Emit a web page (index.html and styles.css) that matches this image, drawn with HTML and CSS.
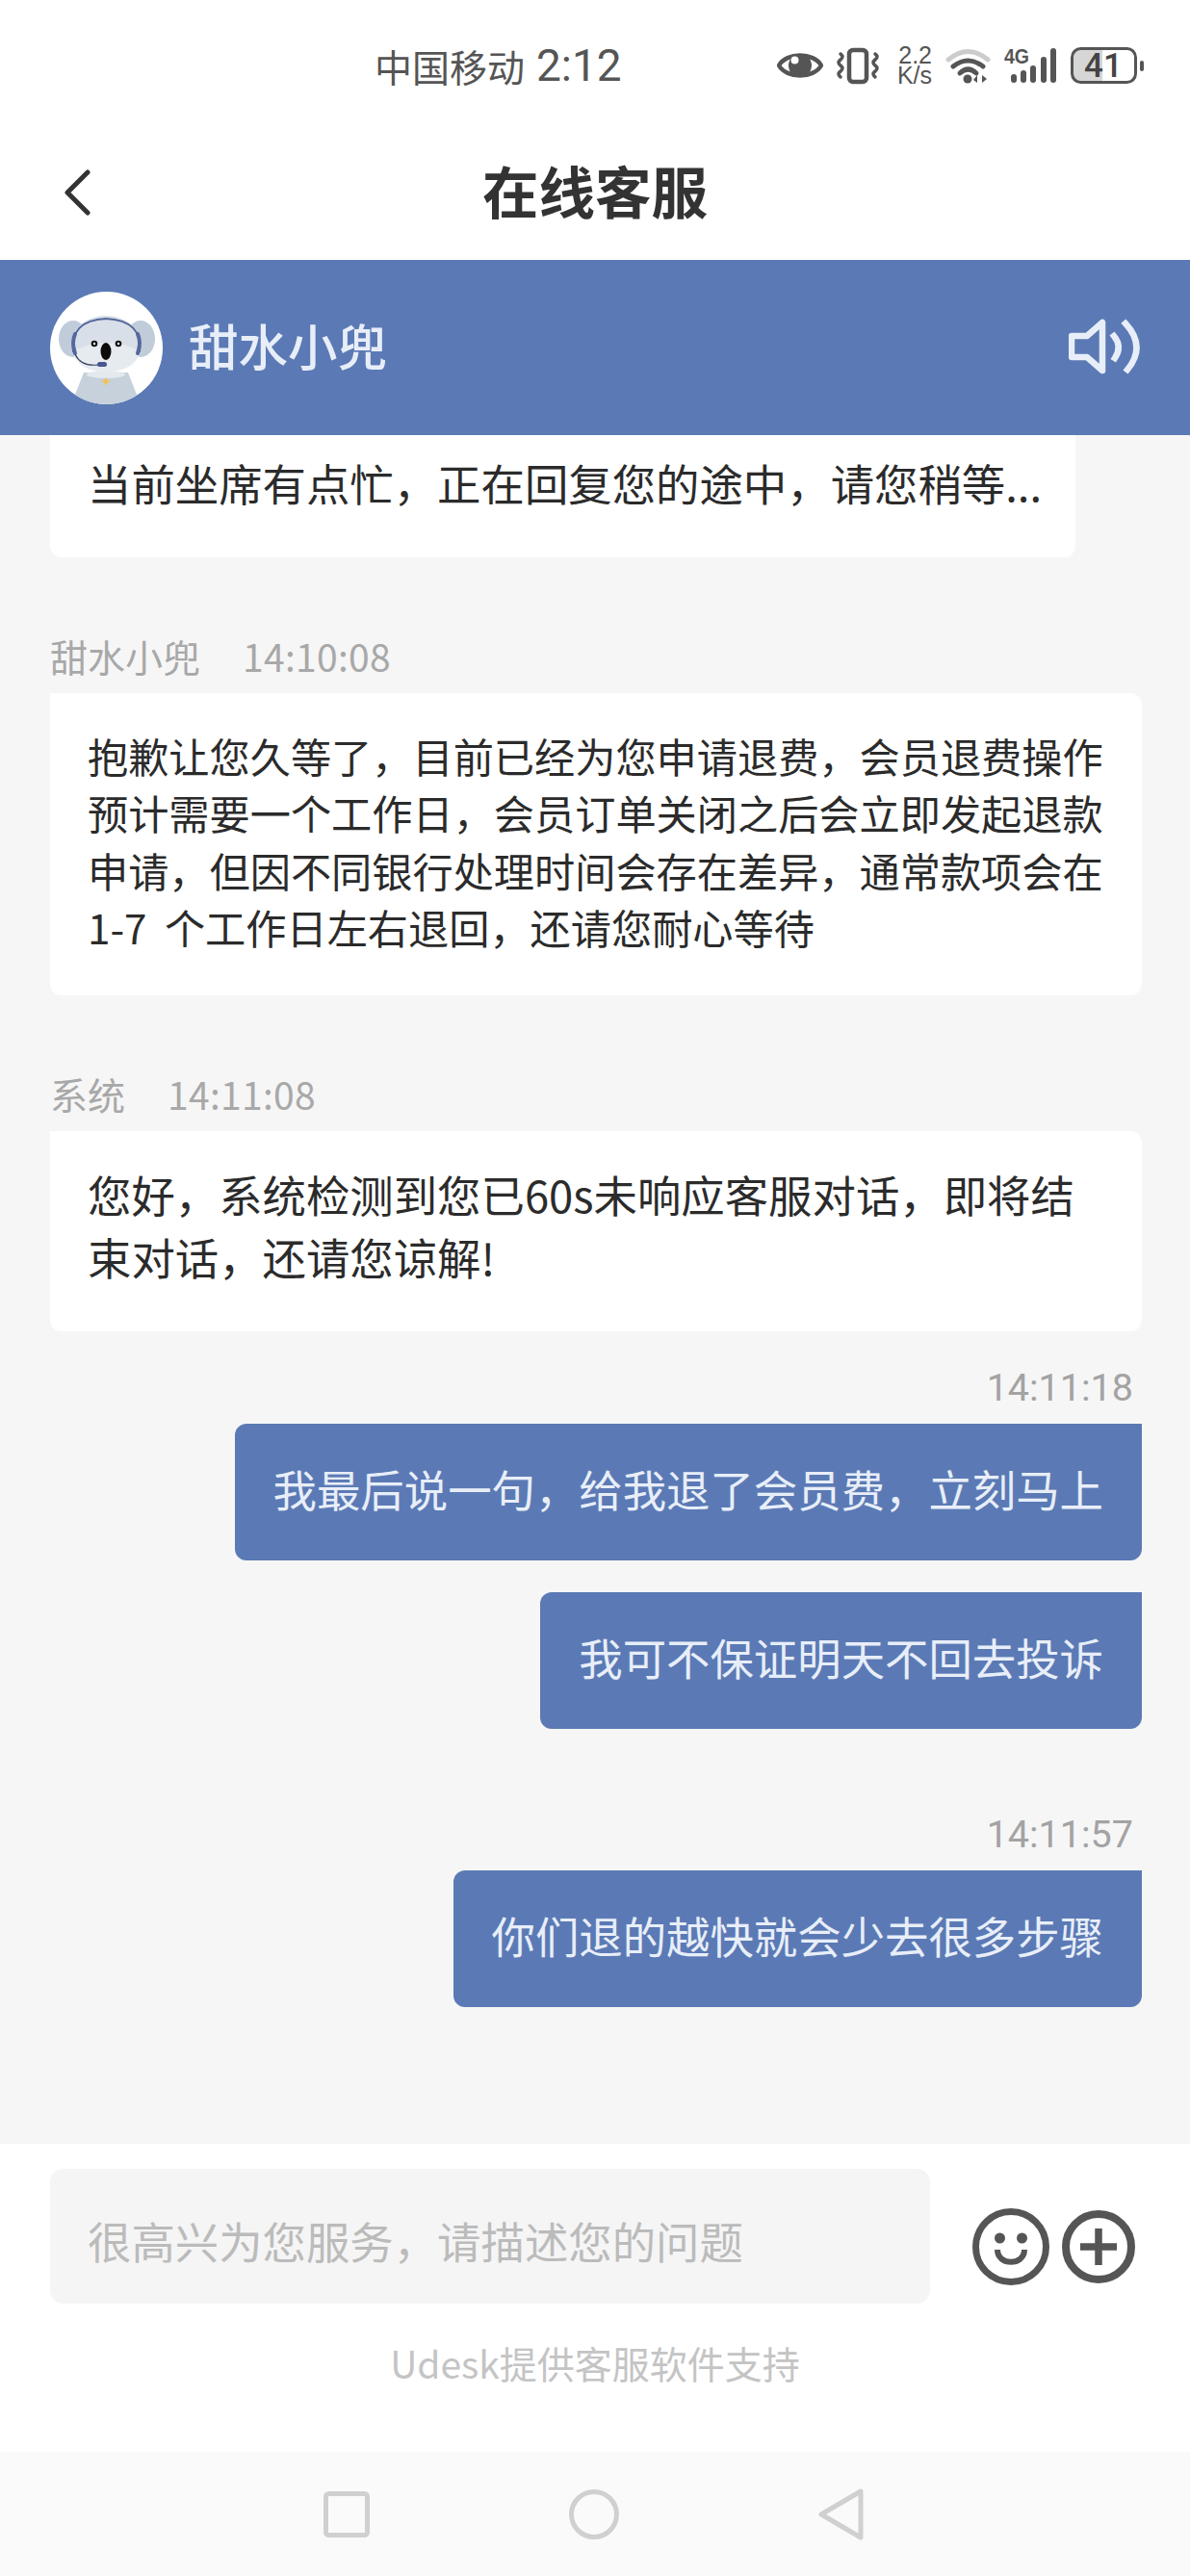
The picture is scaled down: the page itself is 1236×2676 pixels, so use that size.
FILE: index.html
```html
<!DOCTYPE html>
<html lang="zh-CN">
  <head>
    <meta charset="UTF-8" />
    <title>在线客服</title>
    <link rel="stylesheet" href="styles.css">
  </head>
  <body>
    <!-- Status Bar -->
    <div class="statusBar">
      <span class="carrier">中国移动</span>
      <span class="clock">2:12</span>
      <div class="statusIcons">
        <svg width="48" height="40" viewBox="0 0 48 40">
          <path d="M2 20C10 6 38 6 46 20C38 34 10 34 2 20Z" fill="none" stroke="#555" stroke-width="4.500" stroke-linejoin="round"/>
          <circle cx="24" cy="20" r="12" fill="#555"/>
          <circle cx="18.500" cy="14.500" r="4" fill="#fff"/>
        </svg>
        <svg width="45" height="40" viewBox="0 0 45 40">
          <rect x="13" y="4" width="18" height="33" rx="4" fill="none" stroke="#555" stroke-width="4.500"/>
          <path d="M4 8q4 3 0 6q-4 3 0 6q4 3 0 6q-4 3 0 6M40 8q4 3 0 6q-4 3 0 6q4 3 0 6q-4 3 0 6" fill="none" stroke="#555" stroke-width="3.500" stroke-linecap="round"/>
        </svg>
        <div class="speed"><span>2.2</span><span>K/s</span></div>
        <svg width="47" height="40" viewBox="0 0 47 40">
          <path d="M3 14Q23.5 -3 44 14" fill="none" stroke="#ccc" stroke-width="5" stroke-linecap="round"/>
          <path d="M8 21Q23.5 9 39 21" fill="none" stroke="#555" stroke-width="5" stroke-linecap="round"/>
          <path d="M15 28Q23.5 20 32 28" fill="none" stroke="#555" stroke-width="5" stroke-linecap="round"/>
          <circle cx="23" cy="34" r="4.5" fill="#555"/>
          <path d="M33 30v8l-4-3zM38 30v8l5-4z" fill="#555"/>
        </svg>
        <svg width="54" height="40" viewBox="0 0 54 40">
          <text x="0" y="18" class="netType" textLength="26" lengthAdjust="spacingAndGlyphs">4G</text>
          <rect x="7" y="29" width="6" height="9" rx="3" fill="#555"/>
          <rect x="17" y="25" width="6" height="13" rx="3" fill="#555"/>
          <rect x="27" y="20" width="6" height="18" rx="3" fill="#555"/>
          <rect x="38" y="11" width="6" height="27" rx="3" fill="#555"/>
          <rect x="48" y="2" width="6" height="36" rx="3" fill="#555"/>
        </svg>
        <svg width="77" height="40" viewBox="0 0 77 40">
          <path d="M11 3H34V37H11Q3 37 3 29V11Q3 3 11 3Z" fill="#d6d6d6"/>
          <rect x="2.5" y="2.5" width="66" height="35" rx="9" fill="none" stroke="#555" stroke-width="3"/>
          <rect x="73" y="15" width="4" height="11" rx="2" fill="#555"/>
          <text x="35" y="32" class="batteryText" text-anchor="middle">41</text>
        </svg>
      </div>
    </div>

    <!-- Nav Bar -->
    <div class="navBar">
      <svg class="backIcon" width="28" height="48" viewBox="0 0 28 48">
        <path d="M25 3L4 24L25 45" fill="none" stroke="#333" stroke-width="5" stroke-linecap="round" stroke-linejoin="round"/>
      </svg>
      <h1 class="navTitle">在线客服</h1>
    </div>

    <!-- Agent Bar -->
    <div class="agentBar">
      <svg class="avatar" width="117" height="117" viewBox="0 0 117 117">
        <defs>
          <clipPath id="avatarClip"><circle cx="58.5" cy="58.5" r="58.5"/></clipPath>
        </defs>
        <g clip-path="url(#avatarClip)">
          <rect width="117" height="117" fill="#fff"/>
          <path d="M35 84H81L94 117H22Z" fill="#c6d1db"/>
          <ellipse cx="58" cy="86" rx="20" ry="4" fill="#e4e9ee"/>
          <path d="M58 89l2 3l3 1l-3 1.500l-2 3l-2-3l-3-1.500l3-1z" fill="#f0c25e"/>
          <ellipse cx="24" cy="49" rx="15" ry="19" fill="#c0ccda"/>
          <ellipse cx="94" cy="49" rx="15" ry="19" fill="#c0ccda"/>
          <ellipse cx="58" cy="54" rx="36" ry="29" fill="#d8dfe8"/>
          <path d="M23 62Q58 44 94 62Q88 83 58 83Q29 83 23 62Z" fill="#e6ebf0"/>
          <path d="M24 63Q20 30 58 28Q97 30 93 63" fill="none" stroke="#55679c" stroke-width="1.800"/>
          <path d="M26 44Q22 53 26 64" fill="none" stroke="#55679c" stroke-width="4" stroke-linecap="round"/>
          <path d="M91 44Q95 53 91 64" fill="none" stroke="#55679c" stroke-width="4" stroke-linecap="round"/>
          <path d="M26 65Q32 78 50 76" fill="none" stroke="#333c5c" stroke-width="1.200"/>
          <rect x="49" y="73" width="10" height="5" rx="2.500" fill="#47578f"/>
          <circle cx="46" cy="54" r="3.300" fill="#111"/>
          <circle cx="71" cy="54" r="3.300" fill="#111"/>
          <circle cx="46" cy="54" r="1.200" fill="#fff"/>
          <circle cx="71" cy="54" r="1.200" fill="#fff"/>
          <ellipse cx="58" cy="62" rx="5.500" ry="9" fill="#0c0c0c"/>
        </g>
      </svg>
      <span class="agentName">甜水小兜</span>
      <svg class="soundIcon" width="76" height="60" viewBox="0 0 76 60">
        <path d="M3 19H19L35 5V55L19 41H3Z" fill="none" stroke="#e8eef8" stroke-width="6.500" stroke-linejoin="round"/>
        <path d="M47 19Q56 30 48 42" fill="none" stroke="#e8eef8" stroke-width="6.500" stroke-linecap="square"/>
        <path d="M59 6Q81 30 61 54" fill="none" stroke="#e8eef8" stroke-width="6.500" stroke-linecap="square"/>
      </svg>
    </div>

    <!-- Messages -->
    <div class="chatList">
      <div class="bubble cutBubble">当前坐席有点忙，正在回复您的途中，请您稍等...</div>

      <div class="msgInfo"><span>甜水小兜</span><span class="infoTime">14:10:08</span></div>
      <div class="bubble smallBubble">抱歉让您久等了，目前已经为您申请退费，会员退费操作<br>预计需要一个工作日，会员订单关闭之后会立即发起退款<br>申请，但因不同银行处理时间会存在差异，通常款项会在<br>1-7 个工作日左右退回，还请您耐心等待</div>

      <div class="msgInfo"><span>系统</span><span class="infoTime">14:11:08</span></div>
      <div class="bubble wideBubble">您好，系统检测到您已60s未响应客服对话，即将结<br>束对话，还请您谅解!</div>

      <div class="timeRight firstTime">14:11:18</div>
      <div class="bubble myBubble">我最后说一句，给我退了会员费，立刻马上</div>
      <div class="bubble myBubble nextBubble">我可不保证明天不回去投诉</div>

      <div class="timeRight laterTime">14:11:57</div>
      <div class="bubble myBubble">你们退的越快就会少去很多步骤</div>
    </div>

    <!-- Input Section -->
    <div class="footer">
      <div class="inputRow">
        <div class="inputBox">很高兴为您服务，请描述您的问题</div>
        <div class="inputIcons">
          <svg width="80" height="80" viewBox="0 0 80 80">
            <circle cx="40" cy="40" r="36.500" fill="none" stroke="#555" stroke-width="7"/>
            <circle cx="28.500" cy="31" r="5.500" fill="#555"/>
            <circle cx="51.500" cy="31" r="5.500" fill="#555"/>
            <path d="M26 43C26 60 54 60 54 43" fill="none" stroke="#555" stroke-width="6"/>
          </svg>
          <svg width="76" height="76" viewBox="0 0 76 76">
            <circle cx="38" cy="38" r="34" fill="none" stroke="#555" stroke-width="8"/>
            <path d="M19 38H57M38 19V57" fill="none" stroke="#555" stroke-width="7.500"/>
          </svg>
        </div>
      </div>
      <div class="poweredBy">Udesk提供客服软件支持</div>
    </div>

    <!-- System Nav -->
    <div class="sysNav">
      <svg width="48" height="48" viewBox="0 0 48 48">
        <rect x="2.500" y="2.500" width="43" height="43" rx="3" fill="none" stroke="#d0d0d0" stroke-width="5"/>
      </svg>
      <svg width="52" height="52" viewBox="0 0 52 52">
        <circle cx="26" cy="26" r="23.500" fill="none" stroke="#d0d0d0" stroke-width="5"/>
      </svg>
      <svg width="47" height="54" viewBox="0 0 47 54">
        <path d="M44 3V51L3 27Z" fill="none" stroke="#d0d0d0" stroke-width="5" stroke-linejoin="round"/>
      </svg>
    </div>
  </body>
</html>
```

FILE: styles.css
```css
* {
  box-sizing: border-box;
}
body {
  font-family: "Noto Sans CJK SC", "Noto Sans", sans-serif;
  background-color: #fff;
  margin: 0;
  width: 1236px;
  height: 2676px;
  overflow: hidden;
  color: #2b2b2b;
}
.statusBar {
  display: flex;
  align-items: center;
  height: 130px;
  padding: 6px 48px 0 389px;
  color: #555;
}
.carrier {
  font-size: 39px;
  line-height: 50px;
}
.clock {
  font-family: "Roboto", sans-serif;
  font-size: 46px;
  line-height: 50px;
  margin-left: 12px;
}
.statusIcons {
  display: flex;
  align-items: center;
  gap: 14px;
  margin-left: auto;
}
.speed {
  display: flex;
  flex-direction: column;
  align-items: flex-end;
  width: 40px;
  font-family: "Liberation Sans", sans-serif;
  font-size: 25px;
  line-height: 21px;
}
.netType {
  font-family: "Liberation Sans", sans-serif;
  font-size: 22px;
  font-weight: bold;
  fill: #555;
}
.batteryText {
  font-family: "Roboto", sans-serif;
  font-size: 35px;
  font-weight: 500;
  fill: #444;
}
.navBar {
  position: relative;
  display: flex;
  align-items: center;
  justify-content: center;
  height: 140px;
}
.backIcon {
  position: absolute;
  left: 66px;
  top: 46px;
}
.navTitle {
  margin: -7px 0 0;
  font-size: 58.500px;
  font-weight: 700;
  color: #333;
}
.agentBar {
  display: flex;
  align-items: center;
  height: 182px;
  padding: 0 50px 0 52px;
  background-color: #5b7ab5;
  color: #e8eef8;
}
.avatar {
  flex: none;
}
.agentName {
  margin-left: 27px;
  margin-top: -8px;
  font-size: 51.500px;
  font-weight: 500;
}
.soundIcon {
  margin-left: auto;
  margin-top: -2px;
}
.chatList {
  display: flex;
  flex-direction: column;
  align-items: flex-start;
  height: 1775px;
  padding: 0 50px 0 52px;
  background-color: #f6f6f6;
}
.bubble {
  padding: 33px 39px 45px;
  font-size: 45.400px;
  line-height: 65px;
  white-space: nowrap;
  background-color: #fff;
  border-radius: 0 12px 12px 12px;
}
.cutBubble {
  padding: 17px 35px 45px 39px;
  border-radius: 0 0 12px 12px;
}
.smallBubble {
  padding: 35px 39px 42px;
  width: 1134px;
  font-size: 42.200px;
  line-height: 59.300px;
  word-spacing: 9px;
}
.wideBubble {
  width: 1134px;
}
.msgInfo {
  display: flex;
  gap: 44px;
  height: 40px;
  margin-top: 83px;
  margin-bottom: 18px;
  font-size: 39px;
  line-height: 38px;
  color: #a8a8a8;
}
.infoTime {
  letter-spacing: 0.3px;
}
.timeRight {
  align-self: flex-end;
  height: 40px;
  margin-bottom: 17px;
  padding-right: 9px;
  font-family: "Roboto", sans-serif;
  font-size: 39.500px;
  line-height: 40px;
  color: #a3a3a3;
}
.firstTime {
  margin-top: 39px;
}
.laterTime {
  margin-top: 90px;
}
.myBubble {
  align-self: flex-end;
  padding: 35px 40px 42px;
  background-color: #5b7ab5;
  color: #e8eef8;
  border-radius: 12px 0 12px 12px;
}
.nextBubble {
  margin-top: 33px;
}
.footer {
  height: 320px;
  padding: 26px 52px 0;
}
.inputRow {
  display: flex;
  align-items: center;
}
.inputBox {
  width: 914px;
  height: 140px;
  padding: 8px 39px 0;
  font-size: 45.400px;
  line-height: 132px;
  color: #bbb;
  background-color: #f5f5f5;
  border-radius: 14px;
}
.inputIcons {
  display: flex;
  align-items: center;
  gap: 13px;
  margin: 22px 0 0 44px;
}
.poweredBy {
  margin-top: 36px;
  font-size: 39px;
  line-height: 50px;
  text-align: center;
  color: #c4c4c4;
}
.sysNav {
  display: flex;
  align-items: center;
  gap: 207px;
  height: 129px;
  padding-left: 336px;
  background-color: #fafafa;
}
```
